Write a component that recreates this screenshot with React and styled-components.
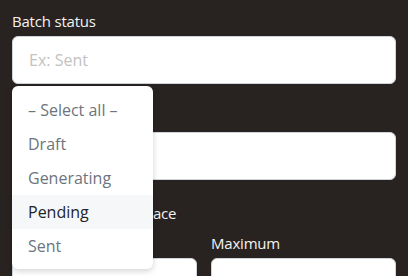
import React from 'react'
import styled, { createGlobalStyle } from 'styled-components'

const GlobalStyle = createGlobalStyle`
  html, body { margin:0; padding:0; background:#282220; }
  body { font-family:"Open Sans", "Noto Sans", sans-serif; }
  * { box-sizing:border-box; }
`

const options = ['– Select all –', 'Draft', 'Generating', 'Pending', 'Sent']

export default function App() {
  return (
    <Page>
      <GlobalStyle />
      <Group>
        <Label>Batch status</Label>
        <Input placeholder="Ex: Sent" />
        <Menu>
          {options.map(o => (
            <Option key={o} $active={o === 'Pending'}>{o}</Option>
          ))}
        </Menu>
      </Group>

      <Group>
        <Label>Batch name</Label>
        <Input />
      </Group>

      <Label>Price in the marketplace</Label>
      <Range>
        <Field>
          <Label>Minimum</Label>
          <Input />
        </Field>
        <Field>
          <Label>Maximum</Label>
          <Input />
        </Field>
      </Range>
    </Page>
  )
}

/* ==== Styled ==== */
const Page = styled.div`padding:11px 12px 0 12px;height:276px;overflow:hidden;`
const Group = styled.div`position:relative;display:flex;flex-direction:column;margin-bottom:23px;`
const Label = styled.label`
  display:block;font-size:15px;line-height:20px;color:#f4f2f0;margin-bottom:5px;
  letter-spacing:-0.2px;
`
const Input = styled.input`
  display:block;width:100%;height:48px;padding:0 16px;
  font:16px "Open Sans", "Noto Sans", sans-serif;color:#212529;
  background:white;border:1px solid #ced4da;border-radius:6px;outline:none;
  &::placeholder{color:#c2c2c2;}
`
const Menu = styled.ul`
  position:absolute;top:calc(100% + 2px);left:0;z-index:10;
  width:141px;margin:0;padding:7px 0 6px;list-style:none;
  background:white;border-radius:6px;
  box-shadow:0 2px 6px rgba(0,0,0,0.18);
`
const Option = styled.li`
  height:34px;line-height:34px;padding:0 16px;font-size:16px;
  color:${p => p.$active ? '#212529' : '#6c757d'};
  background:${p => p.$active ? '#f6f7f9' : 'transparent'};
  white-space:nowrap;
`
const Range = styled.div`display:grid;grid-template-columns:1fr 1fr;gap:14px;margin-top:10px;`
const Field = styled.div`display:flex;flex-direction:column;`
